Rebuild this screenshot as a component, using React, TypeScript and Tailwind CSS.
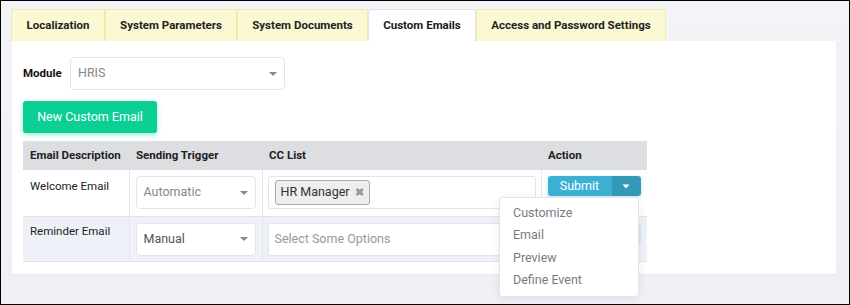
import { useState } from "react";

function Caret() {
  return (
    <svg width="10" height="6" viewBox="0 0 10 6" className="shrink-0">
      <path d="M1 1 L5 5 L9 1 Z" fill="#888" />
    </svg>
  );
}

function SelectBox({ value, w, color }: { value: string; w: string; color: string }) {
  return (
    <div className={`${w} ${color} h-[33px] bg-white border border-[#e3e5e8] rounded-[4px] flex items-center justify-between pl-[7px] pr-[6px] text-[12.5px]`}>
      <span>{value}</span>
      <Caret />
    </div>
  );
}

function SubmitBtn() {
  return (
    <div className="flex w-[93px] h-[20px] rounded-[3px] overflow-hidden shadow-[0_1px_4px_rgba(59,175,208,0.35)]">
      <div className="w-[64px] bg-[#3cb0d2] text-white text-[12.5px] flex items-center justify-center">Submit</div>
      <div className="flex-1 bg-[#3499b8] flex items-center justify-center">
        <svg width="8" height="5" viewBox="0 0 8 5">
          <path d="M0.5 0.5 L4 4.5 L7.5 0.5 Z" fill="#fff" />
        </svg>
      </div>
    </div>
  );
}

function App() {
  let [tab] = useState("Custom Emails");
  const tabs = [
    { name: "Localization", w: "w-[94px]" },
    { name: "System Parameters", w: "w-[132px]" },
    { name: "System Documents", w: "w-[131px]" },
    { name: "Custom Emails", w: "w-[108px]" },
    { name: "Access and Password Settings", w: "w-[190px]" },
  ];

  return (
    <div
      className="w-[850px] h-[305px] border border-black bg-gradient-to-b from-[#f3f4f8] to-[#eef0f5] pl-[10px] pt-[8px] overflow-hidden"
      style={{ fontFamily: "Roboto, 'Liberation Sans', sans-serif" }}
    >
      <div className="flex h-[32px]">
        {tabs.map((t) =>
          t.name == tab ? (
            <div key={t.name} className={`${t.w} h-[32px] bg-white border border-b-0 border-[#e2e4e8] rounded-t-[4px] flex items-center justify-center text-[11.5px] font-bold text-[#1b1b1b]`}>
              {t.name}
            </div>
          ) : (
            <div key={t.name} className={`${t.w} h-[32px] bg-[#fbf9d4] border border-b-0 border-[#f0eab0] flex items-center justify-center text-[11.5px] font-bold text-[#222]`}>
              {t.name}
            </div>
          )
        )}
      </div>

      <div className="relative ml-[1px] w-[824px] h-[233px] bg-white rounded-b-[4px] shadow-[0_1px_3px_rgba(0,0,0,0.04)] pl-[11px] pt-[16px]">
        <div className="flex items-center">
          <span className="text-[11.5px] font-bold text-[#111] w-[47px]">Module</span>
          <SelectBox value="HRIS" w="w-[215px]" color="text-[#888]" />
        </div>

        <button className="mt-[11px] w-[134px] h-[32px] bg-[#0ccf95] text-white text-[12.5px] rounded-[3px] shadow-[0_2px_5px_rgba(12,207,149,0.4)]">
          New Custom Email
        </button>

        <table className="mt-[8px] w-[624px] border-collapse text-[11.5px] text-[#222] table-fixed">
          <thead>
            <tr className="bg-[#dcdee1] h-[29px]">
              <th className="w-[106px] text-left font-bold pl-[7px]">Email Description</th>
              <th className="w-[133px] text-left font-bold pl-[7px]">Sending Trigger</th>
              <th className="w-[279px] text-left font-bold pl-[7px]">CC List</th>
              <th className="text-left font-bold pl-[7px]">Action</th>
            </tr>
          </thead>
          <tbody>
            <tr className="h-[46px] bg-white">
              <td className="align-top pt-[8px] pl-[7px] border-r border-[#e6e8eb]">Welcome Email</td>
              <td className="align-top pt-[6px] pl-[6px] border-r border-[#e6e8eb]">
                <SelectBox value="Automatic" w="w-[120px]" color="text-[#888]" />
              </td>
              <td className="align-top pt-[6px] pl-[5px] border-r border-[#e6e8eb]">
                <div className="w-[268px] h-[33px] border border-[#e3e5e8] rounded-[2px] flex items-center pl-[6px]">
                  <div className="h-[25px] px-[5px] flex items-center gap-[5px] bg-[#eeeeee] border border-[#aaa] rounded-[3px] text-[12.5px] text-[#333]">
                    HR Manager
                    <span className="text-[11px] text-[#999] font-bold leading-none">✖</span>
                  </div>
                </div>
              </td>
              <td className="align-top pt-[6px] pl-[6px]">
                <SubmitBtn />
              </td>
            </tr>
            <tr className="h-[45px] bg-[#eef2f8] border-t border-b border-[#dfe3e8]">
              <td className="align-top pt-[6px] pl-[7px] border-r border-[#e0e4ea]">Reminder Email</td>
              <td className="align-top pt-[6px] pl-[6px] border-r border-[#e0e4ea]">
                <SelectBox value="Manual" w="w-[120px]" color="text-[#555]" />
              </td>
              <td className="align-top pt-[6px] pl-[5px] border-r border-[#e0e4ea]">
                <div className="w-[268px] h-[33px] bg-white border border-[#e3e5e8] rounded-[2px] flex items-center pl-[6px] text-[12.5px] text-[#999]">
                  Select Some Options
                </div>
              </td>
              <td className="align-top pt-[7px] pl-[6px]">
                <div className="w-[93px] h-[20px] rounded-[3px] bg-[#cfe9f2]" />
              </td>
            </tr>
          </tbody>
        </table>

        <div className="absolute left-[487px] top-[156px] w-[140px] h-[100px] bg-white border border-[#e3e5e8] rounded-[4px] shadow-[0_2px_8px_rgba(0,0,0,0.08)] pt-[4px] text-[12.5px] text-[#757b82]">
          <div className="h-[22.5px] flex items-center pl-[13px]">Customize</div>
          <div className="h-[22.5px] flex items-center pl-[13px]">Email</div>
          <div className="h-[22.5px] flex items-center pl-[13px]">Preview</div>
          <div className="h-[22.5px] flex items-center pl-[13px]">Define Event</div>
        </div>
      </div>
    </div>
  );
}

export default App;
